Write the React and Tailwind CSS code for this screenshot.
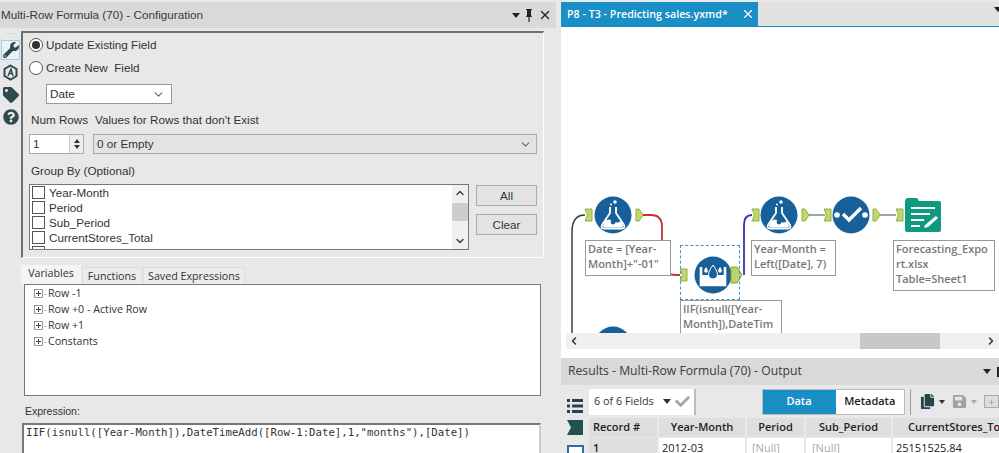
import { FaWrench, FaTag, FaQuestionCircle, FaCheck, FaSave, FaCopy } from "react-icons/fa";
import { ChevronDown, ChevronUp, ChevronLeft, ChevronRight, X } from "lucide-react";

const fields = ["Year-Month", "Period", "Sub_Period", "CurrentStores_Total", "NewStores_Total"];
const treeRows = ["Row -1", "Row +0 - Active Row", "Row +1", "Constants"];

function Radio({ checked, label }) {
    return (
        <div className="flex items-center h-[23px]">
            <span className="w-[14px] h-[14px] rounded-full border border-[#555] bg-white flex items-center justify-center">
                {checked && <span className="w-[8px] h-[8px] rounded-full bg-[#333]"></span>}
            </span>
            <span className="ml-[3px] whitespace-pre">{label}</span>
        </div>
    );
}

function PlusBox() {
    return (
        <span className="relative w-[9px] h-[9px] border border-[#999] bg-white flex items-center justify-center text-[9px] leading-none text-[#444] shrink-0">
            <span className="w-[5px] h-px bg-[#444]"></span>
            <span className="absolute w-px h-[5px] bg-[#444]"></span>
        </span>
    );
}

function InAnchor({ x, y }) {
    return <path d={`M${x} ${y - 6} h7 v12 h-7 l2.5 -6 z`} fill="#c3d76b" stroke="#8db046" strokeWidth="1" />;
}

function OutAnchor({ x, y, big }) {
    return big
        ? <path d={`M${x} ${y - 8} h6 l5 8 l-5 8 h-6 z`} fill="#bcd463" stroke="#7fa63c" strokeWidth="1" />
        : <path d={`M${x} ${y - 6} h3 l4 6 l-4 6 h-3 z`} fill="#c3d76b" stroke="#8db046" strokeWidth="1" />;
}

function FlaskNode({ cx, cy }) {
    return (
        <g transform={`translate(${cx} ${cy})`}>
            <circle r="18.5" fill="#17609a" />
            <path d="M-3 -8 v6 L-11 10 q-1.5 3.5 2 3.5 h18 q3.5 0 2 -3.5 L3 -2 v-6" fill="none" stroke="#fff" strokeWidth="1.8" />
            <path d="M-8 6 q4 -3 8 0 t8 0 l2 5 q0 1.5 -2 1.5 h-16 q-2 0 -2 -1.5 z" fill="#fff" />
            <circle cx="0" cy="7" r="2.4" fill="#17609a" />
            <circle cx="2" cy="-13" r="1.8" fill="#fff" />
            <circle cx="-2" cy="-10.5" r="1" fill="#fff" />
        </g>
    );
}

function Canvas() {
    return (
        <div className="relative h-[306px] shrink-0 bg-white overflow-hidden">
            <svg className="absolute left-0 top-0" width="438" height="306" viewBox="0 0 438 306">
                <path d="M11 306 V205 q0 -17 13 -17" fill="none" stroke="#333" strokeWidth="1.4" />
                <path d="M82 188 h8 q11 0 11 12 v32 q0 16 14 16 h4" fill="none" stroke="#c8303a" strokeWidth="1.8" />
                <path d="M183 248 V198 q0 -10 8 -10" fill="none" stroke="#3434b4" strokeWidth="1.8" />
                <path d="M248 188 h16" stroke="#445" strokeWidth="1" />
                <path d="M319 188 h16" stroke="#445" strokeWidth="1" />
                <InAnchor x={24} y={188} />
                <OutAnchor x={75} y={188} />
                <FlaskNode cx={52} cy={188} />
                <InAnchor x={119} y={248} />
                <circle cx="152" cy="248" r="18.5" fill="#17609a" />
                <path d="M140 240 v18 h24 v-18" fill="none" stroke="#fff" strokeWidth="2.6" />
                <path d="M140 248 h24 v10 h-24 z" fill="#fff" />
                <path d="M152 238 q-6 8 -4 12 q4 4 8 0 q2 -4 -4 -12 z" fill="#17609a" stroke="#fff" strokeWidth="1" />
                <path d="M145 240 q-2.5 3 -1.5 5 q1.5 1.5 3 0 q1 -2 -1.5 -5 z M159 240 q-2.5 3 -1.5 5 q1.5 1.5 3 0 q1 -2 -1.5 -5 z" fill="#fff" />
                <OutAnchor x={170} y={248} big />
                <InAnchor x={191} y={188} />
                <FlaskNode cx={218} cy={188} />
                <OutAnchor x={241} y={188} />
                <InAnchor x={263} y={188} />
                <circle cx="290" cy="188" r="18.5" fill="#17609a" />
                <circle cx="276" cy="188" r="2.8" fill="#fff" />
                <circle cx="304" cy="188" r="2.8" fill="#fff" />
                <path d="M282 187 l6 6 l12 -12" fill="none" stroke="#fff" strokeWidth="3.4" />
                <OutAnchor x={312} y={188} />
                <InAnchor x={335} y={188} />
                <path d="M344 175 q0 -4 3 -4 h9 l2 3 h20 q2 0 2 2 v27 q0 2 -2 2 h-32 q-2 0 -2 -2 z" fill="#0f9a80" />
                <path d="M350 180 h24 v2 h-24 z M350 186 h19 v2 h-19 z M350 192 h13 v2 h-13 z M350 198 h9 v2 h-9 z" fill="#fff" />
                <path d="M364 198 l11 -9 l2 2 l-10 9 l-4 1 z" fill="#fff" />
                <circle cx="52" cy="318" r="18.5" fill="#17609a" />
            </svg>
            <div className="absolute left-[119px] top-[218px] w-[60px] h-[55px] border border-dashed border-[#4a90c0]"></div>
            <div className="absolute left-[24px] top-[213px] w-[86px] h-[36px] border border-[#999] bg-white px-[2px] text-[11px] leading-[15px] text-[#777] font-semibold">Date = [Year-Month]+"-01"</div>
            <div className="absolute left-[119px] top-[273px] w-[102px] h-[60px] border border-[#999] bg-white px-[2px] text-[11px] leading-[15px] text-[#777] font-semibold whitespace-nowrap">IIF(isnull([Year-<br />Month]),DateTim</div>
            <div className="absolute left-[190px] top-[213px] w-[85px] h-[36px] border border-[#999] bg-white px-[2px] text-[11px] leading-[15px] text-[#777] font-semibold">Year-Month = Left([Date], 7)</div>
            <div className="absolute left-[332px] top-[213px] w-[102px] h-[51px] border border-[#999] bg-white px-[2px] text-[11px] leading-[15px] text-[#777] font-semibold">Forecasting_Expo<br />rt.xlsx<br />Table=Sheet1</div>
        </div>
    );
}

export default function App() {
    return (
        <div className="flex w-[999px] h-[453px] overflow-hidden bg-[#e8e8e8] text-[11px] text-[#333] [font-family:'Open_Sans',sans-serif]">
            {/* left: configuration */}
            <div className="w-[556px] shrink-0 flex flex-col overflow-hidden text-[11.7px] [font-family:'Liberation_Sans',sans-serif]">
                <div className="h-[26px] mt-[2px] shrink-0 bg-[#d9d9d9] flex items-center pl-[1px] text-[#3a3a3a]">
                    <span className="flex-1">Multi-Row Formula (70) - Configuration</span>
                    <span className="flex items-center gap-[5px] pr-[4px] text-[#222]">
                        <span className="w-0 h-0 border-x-[4px] border-x-transparent border-t-[5px] border-t-[#222]"></span>
                        <svg width="8" height="13" viewBox="0 0 8 13"><path d="M1 0 h6 v1 h-1 v5 l1 2 h-2.4 v5 h-1.2 v-5 h-2.4 l1 -2 v-5 h-1 z" fill="#222" /></svg>
                        <X size={14} strokeWidth={2.4} />
                    </span>
                </div>
                <div className="flex mt-[3px] shrink-0">
                    <div className="w-[21px] shrink-0 flex flex-col items-center">
                        <div className="h-[8px] text-[8px] leading-[6px] tracking-[1px] text-[#aaa]">···</div>
                        <div className="mt-[1px] w-[19px] h-[20px] border border-[#a8cbe4] bg-[#eaf1f7] flex items-center justify-center text-[#2f4a4a]"><FaWrench size={16} /></div>
                        <svg className="mt-[4px]" width="17" height="17" viewBox="0 0 17 17">
                            <path d="M8.5 1.5 L14.5 5 V12 L8.5 15.5 L2.5 12 V5 Z" fill="none" stroke="#2f4a4a" strokeWidth="2" />
                            <path d="M6 12 L9 5 L11 12 M7 9.5 H10.5" fill="none" stroke="#2f4a4a" strokeWidth="1.4" />
                        </svg>
                        <FaTag className="mt-[6px]" size={16} color="#2f4a4a" />
                        <FaQuestionCircle className="mt-[6px]" size={16} color="#2f4a4a" />
                    </div>
                    <div className="flex-1 min-w-0">
                        <div className="w-[523px] h-[227px] border-l-2 border-t-2 border-l-[#707070] border-t-[#707070] border-r border-b border-r-white border-b-white pl-[6px] relative">
                            <Radio checked label="Update Existing Field" />
                            <Radio label="Create New  Field" />
                            <div className="ml-[17px] mt-[5px] w-[126px] h-[20px] border border-[#999] bg-white flex items-center justify-between px-[3px]">
                                <span>Date</span>
                                <ChevronDown size={13} color="#666" className="mr-[3px]" />
                            </div>
                            <div className="flex mt-[8px] h-[16px] items-center">
                                <span className="w-[66px] pl-[2px]">Num Rows</span>
                                <span>Values for Rows that don't Exist</span>
                            </div>
                            <div className="flex mt-[6px] h-[20px]">
                                <div className="w-[55px] border border-[#aaa] bg-white flex justify-between pl-[3px]">
                                    <span>1</span>
                                    <span className="w-[14px] border-l border-[#ccc] flex flex-col items-center justify-center gap-[2px] bg-[#eee]">
                                        <span className="w-0 h-0 border-x-[3px] border-x-transparent border-b-[4px] border-b-[#333]"></span>
                                        <span className="w-0 h-0 border-x-[3px] border-x-transparent border-t-[4px] border-t-[#333]"></span>
                                    </span>
                                </div>
                                <div className="ml-[9px] w-[444px] border border-[#aaa] bg-[#e3e3e3] flex items-center justify-between pl-[3px] pr-[4px]">
                                    <span>0 or Empty</span>
                                    <ChevronDown size={13} color="#666" />
                                </div>
                            </div>
                            <div className="mt-[9px] h-[16px] pl-[2px] flex items-center">Group By (Optional)</div>
                            <div className="flex mt-[5px]">
                                <div className="relative w-[440px] h-[66px] border border-[#777] bg-white overflow-hidden pl-[2px]">
                                    {fields.map((f) => (
                                        <div key={f} className="flex items-center h-[15px]">
                                            <span className="w-[13px] h-[13px] border border-[#555] bg-white shrink-0"></span>
                                            <span className="ml-[4px]">{f}</span>
                                        </div>
                                    ))}
                                    <div className="absolute right-0 top-0 bottom-0 w-[16px] bg-[#f0f0f0] flex flex-col items-center justify-between py-[2px]">
                                        <ChevronUp size={12} strokeWidth={3} color="#444" />
                                        <div className="absolute top-[18px] w-full h-[18px] bg-[#cdcdcd]"></div>
                                        <ChevronDown size={12} strokeWidth={3} color="#444" />
                                    </div>
                                </div>
                                <div className="ml-[7px] mt-[1px] flex flex-col gap-[8px]">
                                    <div className="w-[61px] h-[21px] border border-[#aaa] bg-[#e3e3e3] flex items-center justify-center">All</div>
                                    <div className="w-[61px] h-[21px] border border-[#aaa] bg-[#e3e3e3] flex items-center justify-center">Clear</div>
                                </div>
                            </div>
                        </div>
                        <div className="flex mt-[7px] h-[19px] items-end text-[10.7px] [font-family:'Open_Sans',sans-serif]">
                            <div className="w-[60px] h-[19px] pb-[2px] bg-[#f4f4f4] flex items-center justify-center">Variables</div>
                            <div className="w-[60px] h-[17px] ml-px bg-[#ececec] border-t border-x border-[#ddd] flex items-center justify-center">Functions</div>
                            <div className="w-[102px] h-[17px] ml-px bg-[#ececec] border-t border-x border-[#ddd] flex items-center justify-center">Saved Expressions</div>
                        </div>
                        <div className="ml-[3px] w-[517px] h-[112px] border border-[#777] bg-white pl-[9px] text-[10.7px] [font-family:'Open_Sans',sans-serif]">
                            {treeRows.map((r) => (
                                <div key={r} className="flex items-center h-[16px]">
                                    <PlusBox />
                                    <span className="ml-px text-[#888] text-[9px] leading-none">-</span>
                                    <span className="ml-[1px]">{r}</span>
                                </div>
                            ))}
                        </div>
                        <div className="ml-[4px] mt-[9px] h-[14px] flex items-center text-[10.5px]">Expression:</div>
                        <div className="ml-[1px] mt-[4px] w-[519px] h-[40px] border-2 border-b-0 border-[#777] border-r-[#ccc] bg-white pl-[2px] text-[10.7px] leading-[16px] whitespace-nowrap [font-family:'DejaVu_Sans_Mono',monospace]">
                            {'IIF(isnull([Year-Month]),DateTimeAdd([Row-1:Date],1,"months"),[Date])'}
                        </div>
                    </div>
                </div>
            </div>

            {/* right: workflow and results */}
            <div className="ml-[5px] flex-1 min-w-0 flex flex-col overflow-hidden">
                <div className="mt-[2px] h-[25px] shrink-0 bg-[#e1e1e1] border-b border-[#1a8fc6] flex justify-between">
                    <div className="w-[197px] bg-[#1a8fc6] text-white font-semibold flex items-center justify-between pl-[6px] pr-[3px]">
                        <span className="text-[10.7px]">P8 - T3 - Predicting sales.yxmd*</span>
                        <X size={14} strokeWidth={2} />
                    </div>
                    <span className="mt-[5px] mr-[-3px] w-0 h-0 border-x-[4px] border-x-transparent border-t-[5px] border-t-[#222]"></span>
                </div>
                <Canvas />
                <div className="h-[16px] shrink-0 bg-white pl-[5px]">
                    <div className="relative h-full bg-[#f0f0f0] flex items-center justify-between px-[2px]">
                        <ChevronLeft size={12} strokeWidth={3} color="#333" />
                        <div className="absolute left-[294px] top-0 w-[80px] h-full bg-[#c8c8c8]"></div>
                        <ChevronRight size={12} strokeWidth={3} color="#333" />
                    </div>
                </div>
                <div className="h-[9px] shrink-0 bg-white"></div>
                <div className="h-[27px] shrink-0 bg-[#d9d9d9] flex items-center pl-[7px] text-[12.2px] text-[#3a3a3a]">
                    <span className="flex-1">Results - Multi-Row Formula (70) - Output</span>
                    <span className="w-0 h-0 border-x-[4px] border-x-transparent border-t-[5px] border-t-[#222]"></span>
                    <span className="ml-[6px] w-[2px] h-[10px] bg-[#222]"></span>
                </div>
                <div className="flex flex-1 min-h-0">
                    <div className="w-[28px] shrink-0 flex flex-col items-center bg-[#e8e8e8]">
                        <div className="h-[8px] mt-[2px] text-[8px] leading-[6px] tracking-[1px] text-[#aaa]">···</div>
                        <svg className="mt-[5px] shrink-0" width="16" height="16" viewBox="0 0 16 16">
                            <path d="M0 1 h3 v3 h-3 z M5 1 h11 v3 h-11 z M0 6.5 h3 v3 h-3 z M5 6.5 h11 v3 h-11 z M0 12 h3 v3 h-3 z M5 12 h11 v3 h-11 z" fill="#24454a" />
                        </svg>
                        <svg className="mt-[6px] shrink-0" width="16" height="15" viewBox="0 0 16 15">
                            <path d="M0 0 h16 v15 h-16 l4 -7.5 z" fill="#24504f" />
                        </svg>
                        <div className="mt-[10px] w-[17px] h-[12px] shrink-0 border-2 border-[#2a6f9e] bg-white"></div>
                    </div>
                    <div className="flex-1 min-w-0 flex flex-col">
                        <div className="h-[33px] shrink-0 flex items-center bg-[#e8e8e8]">
                            <div className="w-[109px] h-[26px] bg-white flex items-center pl-[5px] border-r-2 border-[#bbb] whitespace-nowrap text-[10.8px]">
                                <span>6 of 6 Fields</span>
                                <span className="ml-[9px] w-0 h-0 border-x-[4px] border-x-transparent border-t-[5px] border-t-[#333]"></span>
                                <FaCheck className="ml-[4px]" size={15} color="#a6a6a6" />
                            </div>
                            <div className="ml-[66px] flex h-[26px] w-[147px] border border-[#bbb] bg-white font-semibold">
                                <div className="w-[73px] bg-[#1a8fc6] text-white flex items-center justify-center">Data</div>
                                <div className="flex-1 flex items-center justify-center text-[#222]">Metadata</div>
                            </div>
                            <div className="ml-[5px] h-[26px] border-l border-[#999] pl-[9px] flex items-center gap-[4px] whitespace-nowrap">
                                <FaCopy size={15} color="#24454a" />
                                <span className="w-0 h-0 border-x-[3px] border-x-transparent border-t-[4px] border-t-[#333]"></span>
                                <FaSave className="ml-[3px]" size={15} color="#a0a0a0" />
                                <span className="w-0 h-0 border-x-[3px] border-x-transparent border-t-[4px] border-t-[#aaa]"></span>
                                <span className="ml-[3px] w-[15px] h-[13px] border border-[#aaa] bg-[#ddd] flex items-center justify-center text-[#999] leading-none">+</span>
                            </div>
                        </div>
                        <div className="grid grid-cols-[68px_86px_57px_85px_106px] gap-x-[2px] font-semibold text-[#222] whitespace-nowrap overflow-hidden">
                            <div className="h-[19px] bg-[#dedede] flex items-center pl-[4px]">Record #</div>
                            <div className="h-[19px] bg-[#dedede] flex items-center justify-center">Year-Month</div>
                            <div className="h-[19px] bg-[#dedede] flex items-center justify-center">Period</div>
                            <div className="h-[19px] bg-[#dedede] flex items-center justify-center">Sub_Period</div>
                            <div className="h-[19px] bg-[#dedede] flex items-center pl-[15px] overflow-hidden">CurrentStores_Total</div>
                            <div className="h-[20px] mt-px bg-[#dedede] flex items-center pl-[4px]">1</div>
                            <div className="h-[20px] mt-px bg-white flex items-center pl-[3px] font-normal">2012-03</div>
                            <div className="h-[20px] mt-px bg-white flex items-center pl-[5px] font-normal text-[#aaa]">[Null]</div>
                            <div className="h-[20px] mt-px bg-white flex items-center pl-[6px] font-normal text-[#aaa]">[Null]</div>
                            <div className="h-[20px] mt-px bg-white flex items-center pl-[3px] font-normal">25151525.84</div>
                        </div>
                    </div>
                </div>
            </div>
        </div>
    );
}
